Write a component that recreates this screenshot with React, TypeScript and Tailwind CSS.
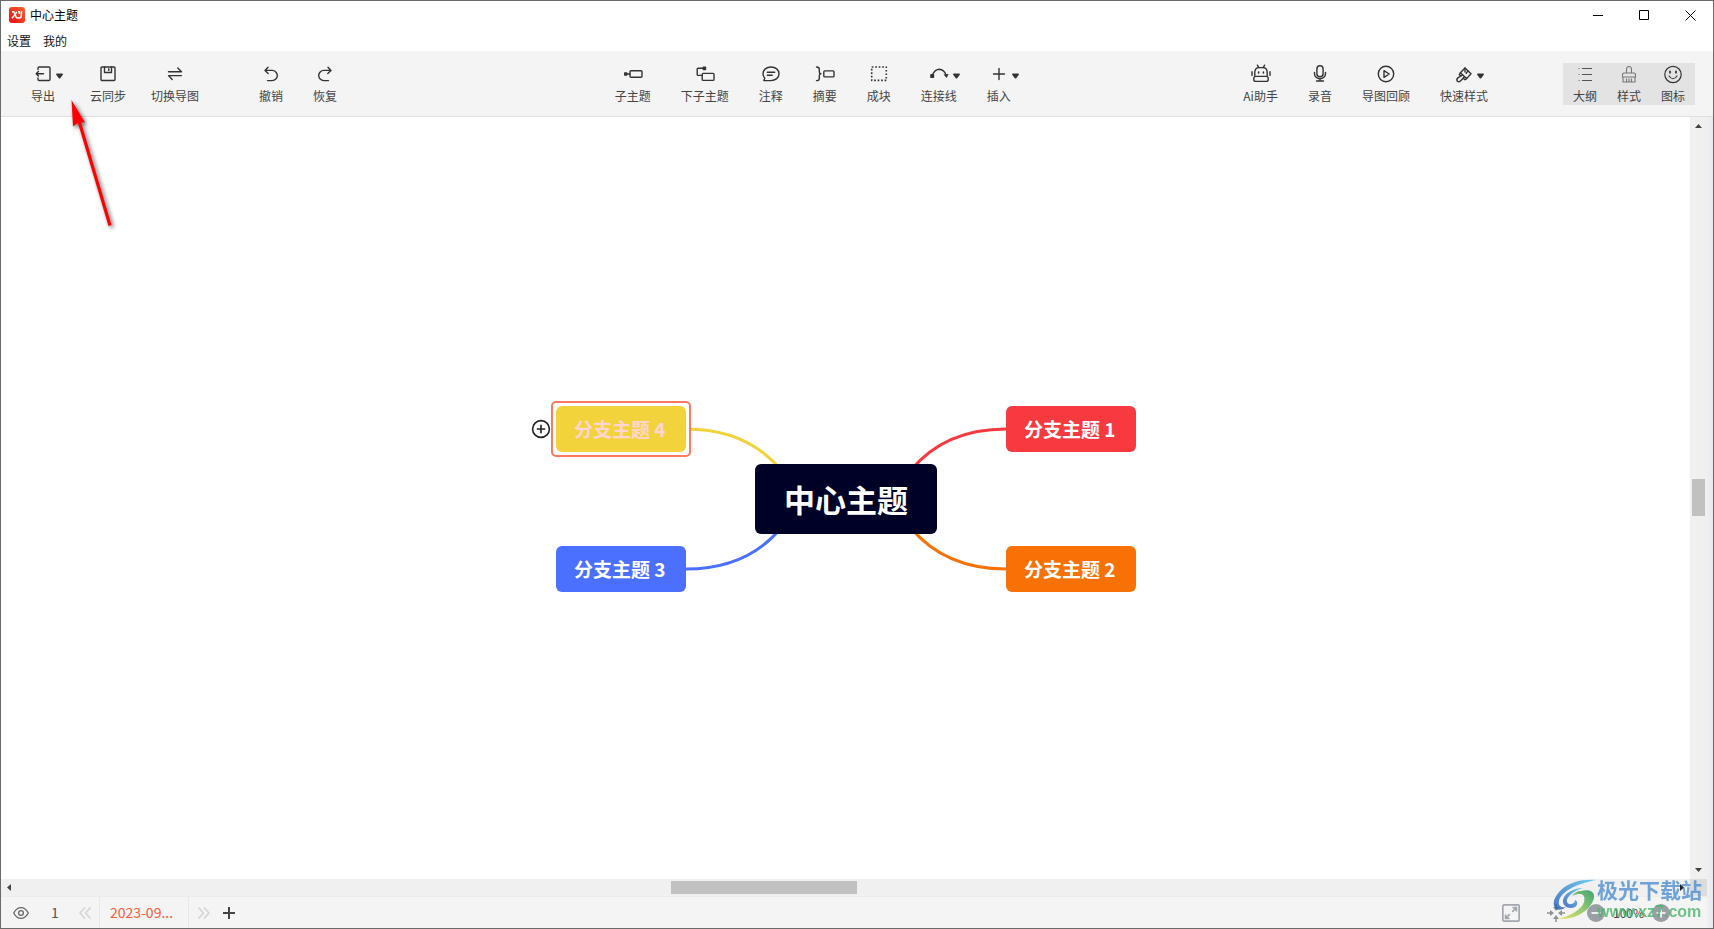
import type { ReactNode } from 'react';
import { clsx } from 'clsx';

interface ToolButtonProps {
  label: string;
  icon: ReactNode;
  caret?: boolean;
  className?: string;
}

const Caret = () => (
  <svg className="h-[6px] w-[7px]" viewBox="0 0 7 6" fill="#333">
    <path d="M0 1.6Q0 .6 1 .6H6Q7 .6 7 1.6L4.2 5.2Q3.5 6 2.8 5.2Z" />
  </svg>
);

const ToolButton = ({ label, icon, caret = false, className = 'px-[15px]' }: ToolButtonProps) => (
  <button
    type="button"
    className={clsx('flex h-[42px] flex-col items-center pt-px text-[12px] leading-[18px] text-[#444]', className)}
  >
    <span className={clsx('flex h-[20px] items-center', caret && '-mx-3 gap-[4px] pl-[11px]')}>
      {icon}
      {caret && (
        <span className="pt-1">
          <Caret />
        </span>
      )}
    </span>
    <span className="mt-[3px] whitespace-nowrap">{label}</span>
  </button>
);

const Icon = ({ children, wide = false }: { children: ReactNode; wide?: boolean }) => (
  <svg
    className={clsx('h-[20px] shrink-0', wide ? 'w-[20px]' : 'w-[18px]')}
    viewBox={wide ? '0 0 20 20' : '1 0 18 20'}
    fill="none"
    stroke="#333"
    strokeWidth="1.4"
    strokeLinecap="round"
    strokeLinejoin="round"
  >
    {children}
  </svg>
);

const icons = {
  exportFile: (
    <Icon>
      <path d="M5 5.6V4.2Q5 3 6.2 3H15.8Q17 3 17 4.2V15.3Q17 16.5 15.8 16.5H6.2Q5 16.5 5 15.3V14" />
      <path d="M10.5 9.8H3.2M5.4 7.6L3.2 9.8L5.4 12" />
    </Icon>
  ),
  save: (
    <Icon>
      <rect x="3" y="3" width="14" height="13.5" rx="1" />
      <path d="M6.5 3V8.5H13.5V3M10.8 4.8V6.4" />
    </Icon>
  ),
  swap: (
    <Icon>
      <path d="M3.5 7.8H16.5L12.8 4M16.5 11.6H3.5L7.2 15.4" />
    </Icon>
  ),
  undo: (
    <Icon>
      <path d="M7 3.2L4 6.4L7.2 9.4M4.2 6.4H11.2A5 5 0 0 1 11.2 16.6H6.5" />
    </Icon>
  ),
  redo: (
    <Icon>
      <path d="M13 3.2L16 6.4L12.8 9.4M15.8 6.4H8.8A5 5 0 0 0 8.8 16.6H13.5" />
    </Icon>
  ),
  child: (
    <Icon wide>
      <rect x="1" y="8.3" width="3.4" height="3.4" rx=".6" fill="#333" stroke="none" />
      <path d="M4 10H7" />
      <rect x="7" y="6.7" width="12" height="6.6" rx="1" />
    </Icon>
  ),
  sibling: (
    <Icon wide>
      <path d="M8.4 4.2H3.2Q2.2 4.2 2.2 5.2V10.4Q2.2 11.4 3.2 11.4H7" />
      <rect x="7.6" y="2.6" width="3.6" height="3.6" rx=".6" fill="#333" stroke="none" />
      <rect x="7.2" y="9.4" width="11.8" height="7" rx="1" />
    </Icon>
  ),
  comment: (
    <Icon>
      <path d="M10 3C14.6 3 18 5.7 18 9.7S14.6 16.6 10 16.6H2.8L3.8 14.2C2.6 13 2 11.5 2 9.7C2 5.7 5.4 3 10 3Z" />
      <path d="M6.3 8.2H13.7M6.3 11.2H11.2" />
    </Icon>
  ),
  summary: (
    <Icon wide>
      <path d="M1.5 3Q4.3 3 4.3 5.2V8Q4.3 9.8 6 9.8Q4.3 9.8 4.3 11.6V14.4Q4.3 16.6 1.5 16.6" />
      <rect x="8.8" y="6.9" width="10.2" height="6" rx="1" />
    </Icon>
  ),
  block: (
    <Icon>
      <rect x="2.7" y="3" width="14.6" height="13.4" strokeDasharray="1.7 1.8" strokeLinecap="butt" strokeWidth="1.6" />
    </Icon>
  ),
  link: (
    <Icon wide>
      <rect x="1.2" y="10" width="4" height="4" rx=".8" fill="#333" stroke="none" />
      <path d="M3.4 10.8Q6 5.2 10.4 5.2Q15 5.4 17 11" />
      <path d="M14.6 10.4L19.6 10L17.6 14Z" fill="#333" stroke="none" />
    </Icon>
  ),
  insert: (
    <Icon>
      <path d="M10 4.5V15.5M4.5 10H15.5" />
    </Icon>
  ),
  robot: (
    <Icon wide>
      <path d="M6.4 1.2L7.6 3.4M13.6 1.2L12.4 3.4" />
      <path d="M3.8 11.6V8.2Q4 3.6 8 3.6H12Q16 3.6 16.2 8.2V11.6" />
      <path d="M1 7.8V11.4M19 7.8V11.4" />
      <path d="M7.6 8V9M12.4 8V9" strokeWidth="1.6" />
      <rect x="2.8" y="12.4" width="14.4" height="5" rx="2" />
    </Icon>
  ),
  mic: (
    <Icon>
      <rect x="6.9" y="1.8" width="6.2" height="11" rx="3.1" />
      <path d="M4.5 8.5V9.8A5.5 5 0 0 0 15.5 9.8V8.5M10 15V17M6.5 17H13.5" />
    </Icon>
  ),
  play: (
    <Icon>
      <circle cx="10" cy="10" r="7.7" />
      <path d="M8 6.6L13.2 10L8 13.4Z" />
    </Icon>
  ),
  brush: (
    <Icon>
      <path d="M11 4L17 9.8L12.6 14.6L6.4 8.8Z" />
      <path d="M11 4V8M14 6.8L12.2 9.4M8.6 11L4.2 13.6Q2 15.4 3.4 17.2Q5.2 18.6 7 16.4L10.4 12.8M6.4 8.8L5.2 10.6L7 12.2M12.6 14.6L11 15.8L9.4 14.4" />
    </Icon>
  ),
  outline: (
    <svg className="h-[20px] w-[18px]" viewBox="0 0 18 20" fill="none" stroke="#555" strokeWidth="1">
      <path d="M6 4.5H16M6 10.5H16M6 16.5H16" />
      <path d="M2.5 4.5H4M2.5 10.5H4M2.5 16.5H4" stroke="#b08968" />
    </svg>
  ),
  style: (
    <svg className="h-[20px] w-[18px]" viewBox="0 0 18 20" fill="none" stroke="#777" strokeWidth="1.1">
      <path d="M6.5 9V5.5A2.5 3 0 0 1 11.5 5.5V9M2.5 13V10.5Q2.5 9 4 9H14Q15.5 9 15.5 10.5V13ZM3 13V18H15V13M6.5 14.5V18M9 14.5V18M11.5 14.5V18" />
    </svg>
  ),
  smile: (
    <svg className="h-[20px] w-[18px]" viewBox="0 0 18 20" fill="none" stroke="#333" strokeWidth="1.2" strokeLinecap="round">
      <circle cx="9" cy="10.5" r="8.2" />
      <path d="M5 12Q9 17.5 13 12" />
      <path d="M6 7.5V8.7M12 7.5V8.7" strokeWidth="1.8" />
    </svg>
  ),
};

const TitleBar = () => (
  <header className="flex h-[30px] items-start justify-between bg-white">
    <div className="flex h-[28px] items-center gap-[5px] pl-2">
      <svg className="h-4 w-4" viewBox="0 0 16 16">
        <defs>
          <linearGradient id="logo" x1="0" y1="1" x2="1" y2="0">
            <stop offset="0" stopColor="#f50a12" />
            <stop offset="1" stopColor="#f2672f" />
          </linearGradient>
        </defs>
        <rect width="16" height="16" rx="3" fill="url(#logo)" />
        <path
          d="M3 4.8H4.8L7 9.8Q7.6 11 9 11H10.2Q12 11 12.2 9L12.6 4.2M7.8 4.8L6.2 7.4L3 11.2M9.2 4.8H10.4V7"
          fill="none"
          stroke="#fff"
          strokeWidth="1.5"
        />
      </svg>
      <h1 className="text-[12px] leading-[18px] text-black">中心主题</h1>
    </div>
    <div className="flex">
      <button type="button" aria-label="最小化" className="flex h-[28px] w-[46px] items-center justify-center">
        <svg className="h-[11px] w-[11px]" viewBox="0 0 11 11" stroke="#000">
          <path d="M0 5.5H10" />
        </svg>
      </button>
      <button type="button" aria-label="最大化" className="flex h-[28px] w-[46px] items-center justify-center">
        <svg className="h-[11px] w-[11px]" viewBox="0 0 11 11" fill="none" stroke="#000">
          <path d="M.5 .5H9.5V9.5H.5Z" />
        </svg>
      </button>
      <button type="button" aria-label="关闭" className="flex h-[28px] w-[46px] items-center justify-center">
        <svg className="h-[11px] w-[11px]" viewBox="0 0 11 11" stroke="#000">
          <path d="M.5 .5L10.5 10.5M10.5 .5L.5 10.5" />
        </svg>
      </button>
    </div>
  </header>
);

const Toolbar = () => (
  <div className="flex h-[66px] items-start border-b border-[#e0e0e0] bg-[#f4f4f4] pt-3 pr-[18px] pl-[18px]">
    <div className="flex">
      <ToolButton label="导出" icon={icons.exportFile} caret className="mr-[11px] px-3" />
      <ToolButton label="云同步" icon={icons.save} className="px-3" />
      <ToolButton label="切换导图" icon={icons.swap} className="px-[13px]" />
    </div>
    <div className="ml-[32px] flex">
      <ToolButton label="撤销" icon={icons.undo} />
      <ToolButton label="恢复" icon={icons.redo} />
    </div>
    <div className="grow-[11]" />
    <div className="flex">
      <ToolButton label="子主题" icon={icons.child} />
      <ToolButton label="下子主题" icon={icons.sibling} />
      <ToolButton label="注释" icon={icons.comment} />
      <ToolButton label="摘要" icon={icons.summary} />
      <ToolButton label="成块" icon={icons.block} />
      <ToolButton label="连接线" icon={icons.link} caret />
      <ToolButton label="插入" icon={icons.insert} caret />
    </div>
    <div className="grow-[9]" />
    <div className="flex">
      <ToolButton label="Ai助手" icon={icons.robot} />
      <ToolButton label="录音" icon={icons.mic} />
      <ToolButton label="导图回顾" icon={icons.play} />
      <ToolButton label="快速样式" icon={icons.brush} caret />
    </div>
    <div className="ml-[60px] flex bg-[#e3e3e3]">
      <ToolButton label="大纲" icon={icons.outline} className="px-[10px]" />
      <ToolButton label="样式" icon={icons.style} className="px-[10px]" />
      <ToolButton label="图标" icon={icons.smile} className="px-[10px]" />
    </div>
  </div>
);

const branchClass = 'absolute flex h-[46px] w-[130px] items-center rounded-md pl-[18px] text-[19px] font-bold whitespace-pre';

const MindMap = () => (
  <div className="relative h-[186px] w-[580px] shrink-0">
    <svg className="absolute inset-0 h-full w-full" viewBox="0 0 580 186" fill="none" strokeWidth="3">
      <path d="M130 23C168 23 200 34 225 64" stroke="#f2d33b" />
      <path d="M130 163C168 163 200 152 225 122" stroke="#4b6fff" />
      <path d="M450 23C412 23 380 34 355 64" stroke="#f73a40" />
      <path d="M450 163C412 163 380 152 355 122" stroke="#f77104" />
    </svg>
    <div className="absolute top-[58px] left-[199px] flex h-[70px] w-[182px] items-center justify-center rounded-md bg-[#000126] text-[31px] font-bold text-white">
      中心主题
    </div>
    <div className={clsx(branchClass, 'top-0 left-[450px] bg-[#f73a40] text-white')}>分支主题 1</div>
    <div className={clsx(branchClass, 'top-[140px] left-[450px] bg-[#f77104] text-white')}>分支主题 2</div>
    <div className={clsx(branchClass, 'top-[140px] left-0 bg-[#4b6fff] text-white')}>分支主题 3</div>
    <div className="absolute -top-[5px] -left-[5px] h-[56px] w-[140px] rounded-[5px] border-2 border-[#ff7860] bg-white" />
    <div className={clsx(branchClass, 'top-0 left-0 bg-[#f2d33b] text-[#ffd5d2]')}>分支主题 4</div>
    <button type="button" aria-label="添加子主题" className="absolute top-[13px] -left-[25px]">
      <svg className="h-5 w-5" viewBox="0 0 20 20" fill="none" stroke="#222" strokeWidth="1.6">
        <circle cx="10" cy="10" r="8.4" />
        <path d="M10 5.8V14.2M5.8 10H14.2" />
      </svg>
    </button>
  </div>
);

const PointerArrow = () => (
  <svg className="absolute -top-[18px] left-[64px] h-[136px] w-[60px] drop-shadow-[2px_2px_2px_rgba(0,0,0,0.6)]" viewBox="0 0 60 136">
    <path d="M14 22L45 126.5" stroke="#f00" strokeWidth="3.2" />
    <path d="M6.5 1L20 23.500L14 23L8 27.5Z" fill="#f00" />
  </svg>
);

const VerticalScroll = () => (
  <div className="flex w-[17px] shrink-0 flex-col items-center bg-[#f0f0f0]">
    <button type="button" aria-label="向上滚动" className="flex h-[18px] w-full items-center justify-center">
      <svg className="h-[4px] w-[7px]" viewBox="0 0 7 4" fill="#444">
        <path d="M0 4L3.5 0L7 4Z" />
      </svg>
    </button>
    <div className="grow-[344]" />
    <div className="h-[37px] w-[13px] bg-[#c1c1c1]" />
    <div className="grow-[345]" />
    <button type="button" aria-label="向下滚动" className="flex h-[18px] w-full items-center justify-center">
      <svg className="h-[4px] w-[7px]" viewBox="0 0 7 4" fill="#444">
        <path d="M0 0L3.5 4L7 0Z" />
      </svg>
    </button>
  </div>
);

const HorizontalScroll = () => (
  <div className="flex h-[17px] items-center bg-[#f0f0f0]">
    <button type="button" aria-label="向左滚动" className="flex h-full w-[16px] items-center justify-center">
      <svg className="h-[7px] w-[4px]" viewBox="0 0 4 7" fill="#444">
        <path d="M4 0L0 3.5L4 7Z" />
      </svg>
    </button>
    <div className="grow-[654]" />
    <div className="h-[13px] w-[186px] bg-[#c1c1c1]" />
    <div className="grow-[817]" />
    <button type="button" aria-label="向右滚动" className="flex h-full w-[16px] items-center justify-center">
      <svg className="h-[7px] w-[4px]" viewBox="0 0 4 7" fill="#222">
        <path d="M0 0L4 3.5L0 7Z" />
      </svg>
    </button>
    <div className="h-full w-[17px] bg-[#dcdcdc]" />
  </div>
);

const StatusBar = () => (
  <footer className="flex h-[32px] items-center justify-between border-t border-[#ececec] bg-[#f4f4f4] text-[14px] text-[#555]">
    <div className="flex h-full items-center">
      <button type="button" aria-label="显示" className="ml-3 flex w-4">
        <svg className="h-4 w-4" viewBox="0 0 16 16" fill="none" stroke="#666" strokeWidth="1.3">
          <path d="M.7 8Q3.6 2.6 8 2.6T15.3 8Q12.4 13.4 8 13.4T.7 8Z" />
          <circle cx="8" cy="8" r="2.4" />
        </svg>
      </button>
      <span className="ml-[22px] w-[8px]">1</span>
      <button type="button" aria-label="上一页" className="ml-[20px] flex w-[20px]">
        <svg className="h-[12px] w-[12px]" viewBox="0 0 12 12" fill="none" stroke="#d2d2d2" strokeWidth="1.4">
          <path d="M6 .5L1 6L6 11.5M11.5 .5L6.5 6L11.5 11.5" />
        </svg>
      </button>
      <button type="button" className="h-full w-[90px] border-x border-[#e8e8e8] pr-[5px] text-[#ff5a3c]">
        2023-09...
      </button>
      <button type="button" aria-label="下一页" className="ml-[9px] flex w-[12px]">
        <svg className="h-[12px] w-[12px]" viewBox="0 0 12 12" fill="none" stroke="#d2d2d2" strokeWidth="1.4">
          <path d="M.5 .5L5.5 6L.5 11.5M6 .5L11 6L6 11.5" />
        </svg>
      </button>
      <button type="button" aria-label="新建" className="ml-[13px] flex">
        <svg className="h-[12px] w-[12px]" viewBox="0 0 12 12" stroke="#444" strokeWidth="2">
          <path d="M6 0V12M0 6H12" />
        </svg>
      </button>
    </div>
    <div className="flex items-center pr-[37px]">
      <button type="button" aria-label="全屏" className="flex">
        <svg className="h-[18px] w-[18px]" viewBox="0 0 18 18" fill="none" stroke="#a3a7ad" strokeWidth="1.7">
          <rect x=".8" y=".8" width="16.4" height="16.4" rx="1.5" />
          <path d="M10.5 3.6H14.4V7.5M14.4 3.6L10.2 7.8M7.5 14.4H3.6V10.5M3.6 14.4L7.8 10.2" />
        </svg>
      </button>
      <button type="button" aria-label="居中" className="ml-[27px] flex">
        <svg className="h-[18px] w-[18px]" viewBox="0 0 18 18" fill="#8d9197" stroke="#8d9197" strokeWidth="1.5">
          <path d="M9 0V3M9 18V15M0 9H3M18 9H15" />
          <path d="M6 3L9 7L12 3ZM6 15L9 11L12 15ZM3 6L7 9L3 12ZM15 6L11 9L15 12Z" stroke="none" />
        </svg>
      </button>
      <button type="button" aria-label="缩小" className="ml-[22px] flex">
        <svg className="h-[18px] w-[18px]" viewBox="0 0 18 18">
          <circle cx="9" cy="9" r="9" fill="#9a9fa6" />
          <path d="M4.5 9H13.5" stroke="#fff" strokeWidth="1.6" />
        </svg>
      </button>
      <span className="w-[47px] text-center text-[12px] text-[#444]">100%</span>
      <button type="button" aria-label="放大" className="flex">
        <svg className="h-[18px] w-[18px]" viewBox="0 0 18 18">
          <circle cx="9" cy="9" r="9" fill="#9a9fa6" />
          <path d="M4.5 9H13.5M9 4.5V13.5" stroke="#fff" strokeWidth="1.6" />
        </svg>
      </button>
    </div>
  </footer>
);

const Watermark = () => (
  <div className="pointer-events-none absolute right-[11px] bottom-[7px] flex items-end opacity-80">
    <svg className="h-[42px] w-[44px]" viewBox="0 0 44 42">
      <defs>
        <linearGradient id="swirl" x1="0" y1="1" x2="1" y2="0">
          <stop offset="0" stopColor="#2456b8" />
          <stop offset="1" stopColor="#4cc4f2" />
        </linearGradient>
        <linearGradient id="leaf" x1="0" y1="1" x2="1" y2="0">
          <stop offset="0" stopColor="#e8e34a" />
          <stop offset=".5" stopColor="#7cc04f" />
          <stop offset="1" stopColor="#14905a" />
        </linearGradient>
      </defs>
      <path d="M43 1C30 0 16 3 8 11C0 19 -1 26 3 30C6 32 11 30 13 28C8 29 5 27 6 22C8 13 22 5 43 1Z" fill="url(#swirl)" />
      <path d="M30 9C20 9 11 15 10 21C9 27 16 31 22 28C25 26 25 22 22 21C22 25 16 27 14 23C13 18 20 12 30 9Z" fill="url(#swirl)" />
      <path d="M28 12C36 10 42 12 41 19C38 31 23 41 5 40C16 37 29 31 31 23C33 15 28 13 19 17C21 14 24 12 28 12Z" fill="url(#leaf)" />
    </svg>
    <div className="flex flex-col gap-[2px]">
      <span className="text-[21px] leading-[24px] font-bold text-[#4f8fd0]">极光下载站</span>
      <span className="font-[Liberation_Sans] text-[16px] leading-[18px] font-bold text-[#4db56c]">www.xz7.com</span>
    </div>
  </div>
);

export default function App() {
  return (
    <div className="relative flex h-screen flex-col overflow-hidden border border-[#6a6a6a] bg-white font-['Noto_Sans_CJK_SC',sans-serif]">
      <TitleBar />
      <nav className="flex h-[20px] items-center gap-3 pl-[6px] text-[12px] leading-[18px] text-[#111]">
        <button type="button">设置</button>
        <button type="button">我的</button>
      </nav>
      <Toolbar />
      <div className="flex min-h-0 flex-1">
        <div className="flex min-w-0 flex-1 flex-col">
          <div className="flex min-h-0 flex-1">
            <main className="relative flex min-w-0 flex-1 items-center justify-center bg-white pt-[2px] pl-px">
              <MindMap />
              <PointerArrow />
            </main>
            <VerticalScroll />
          </div>
          <HorizontalScroll />
          <StatusBar />
        </div>
        <div className="w-[6px] shrink-0 bg-linear-to-r from-[#f0f0f0] to-[#e6e9f1]" />
      </div>
      <Watermark />
    </div>
  );
}
